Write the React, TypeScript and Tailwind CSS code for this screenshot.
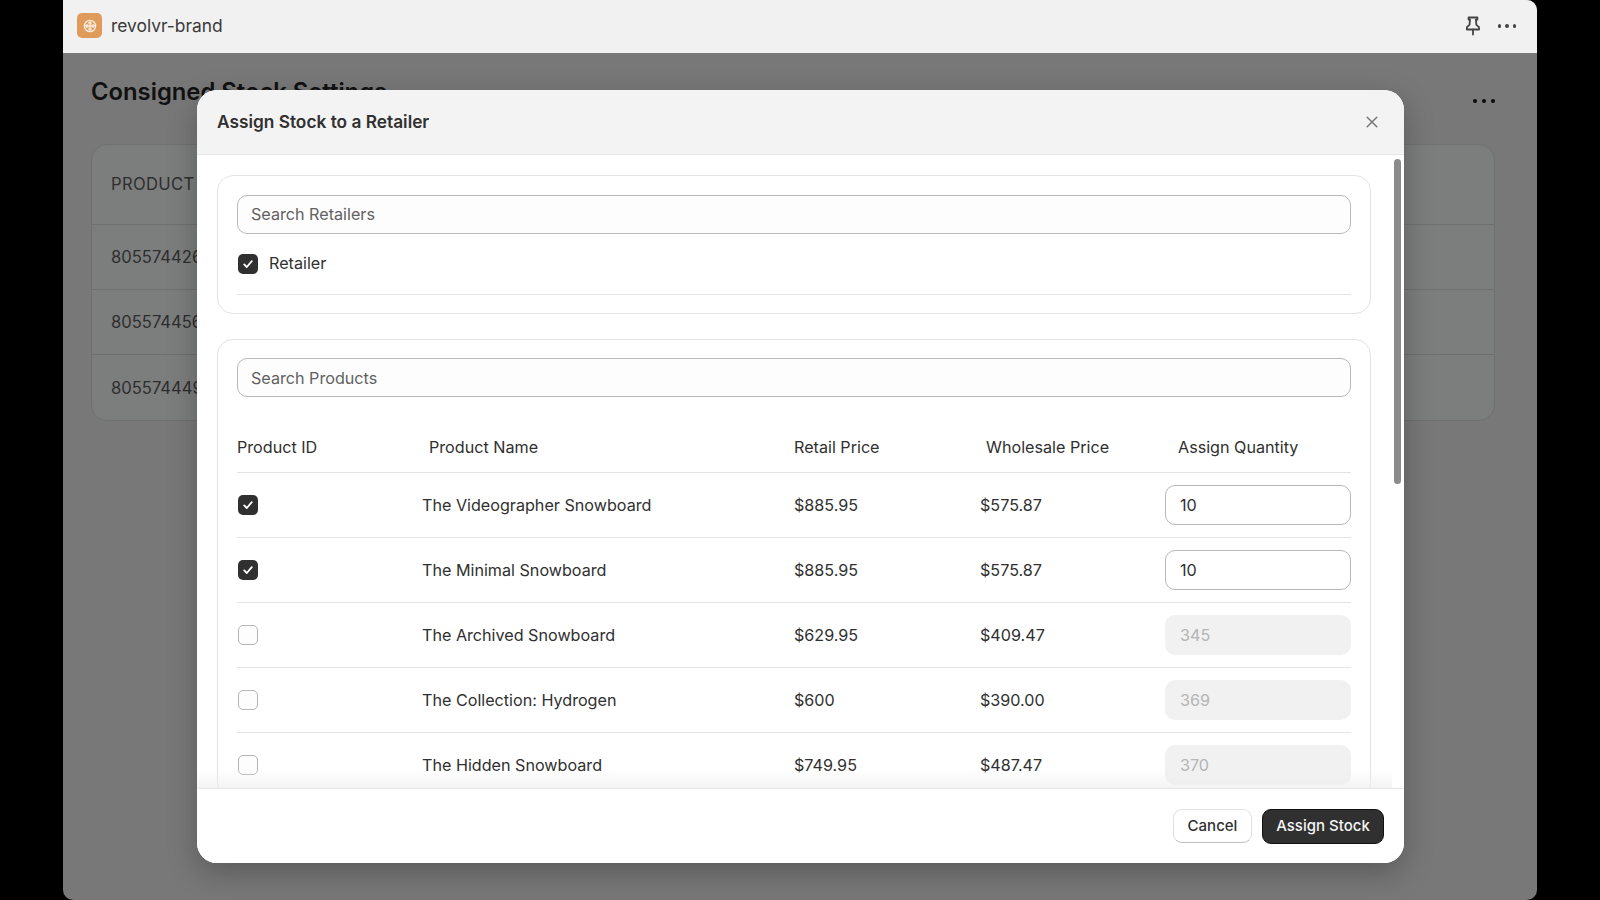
import React from "react";

const rows = [
  { name: "The Videographer Snowboard", retail: "$885.95", whole: "$575.87", qty: "10", on: true },
  { name: "The Minimal Snowboard", retail: "$885.95", whole: "$575.87", qty: "10", on: true },
  { name: "The Archived Snowboard", retail: "$629.95", whole: "$409.47", qty: "345", on: false },
  { name: "The Collection: Hydrogen", retail: "$600", whole: "$390.00", qty: "369", on: false },
  { name: "The Hidden Snowboard", retail: "$749.95", whole: "$487.47", qty: "370", on: false },
];

function Check({ on }: { on: boolean }) {
  return on ? (
    <span className="flex h-[20px] w-[20px] items-center justify-center rounded-[5px] bg-[#303030]">
      <svg width="12" height="12" viewBox="0 0 12 12" fill="none">
        <path d="M2.2 6.4 4.8 9 9.8 3.2" stroke="#fff" strokeWidth="1.8" strokeLinecap="round" strokeLinejoin="round" />
      </svg>
    </span>
  ) : (
    <span className="block h-[20px] w-[20px] rounded-[5px] border border-[#b5b5b5] bg-[#fdfdfd]" />
  );
}

function Dots({ color, gap, size }: { color: string; gap: string; size: string }) {
  return (
    <span className={`flex items-center ${gap}`}>
      <span className={`rounded-full ${size} ${color}`} />
      <span className={`rounded-full ${size} ${color}`} />
      <span className={`rounded-full ${size} ${color}`} />
    </span>
  );
}

function SearchBox({ text }: { text: string }) {
  return (
    <div className="flex h-[39px] items-center rounded-[10px] border border-[#b9b9b9] bg-[#fdfdfd] pl-[13px] text-[#616161]">
      {text}
    </div>
  );
}

export default function App() {
  return (
    <div className="flex h-[900px] w-full overflow-hidden bg-black pl-[63px] pr-[63px] text-[16.15px] text-[#303030] [font-family:Inter,'Liberation_Sans',sans-serif]">
      <div className="relative flex h-full w-full flex-col overflow-hidden rounded-b-[10px] rounded-tr-[10px] bg-[#787878]">
        <header className="flex h-[53px] shrink-0 items-center justify-between bg-[#f1f1f1] pb-[1px] pl-[14px] pr-[21px]">
          <div className="flex items-center gap-[9px]">
            <span className="flex h-[25px] w-[25px] items-center justify-center rounded-[5px] bg-[#e09b5b]">
              <svg width="14" height="14" viewBox="0 0 14 14" fill="none" stroke="#fbeee0" strokeWidth="1.4">
                <circle cx="7" cy="7" r="5.6" />
                <circle cx="7" cy="7" r="1.1" />
                <circle cx="7" cy="3.9" r="1" />
                <circle cx="7" cy="10.1" r="1" />
                <circle cx="3.9" cy="7" r="1" />
                <circle cx="10.1" cy="7" r="1" />
              </svg>
            </span>
            <span className="text-[17.4px] text-[#3a3a3a]">revolvr-brand</span>
          </div>
          <div className="flex items-center gap-[17px]">
            <svg width="16" height="20" viewBox="0 0 16 20" fill="none" stroke="#444" strokeWidth="1.8" strokeLinejoin="round" strokeLinecap="round">
              <path d="M3.6 1.5h8.8v2.2h-1.5l.5 5.2 2.6 2.3v2.3H1.9v-2.3l2.6-2.3.5-5.2H3.6V1.5Z" />
              <path d="M8 13.5v5" />
            </svg>
            <Dots color="bg-[#444444]" gap="gap-[4px]" size="h-[3.5px] w-[3.5px]" />
          </div>
        </header>

        <main className="flex-1 pl-[28px] pr-[42px] pt-[24px]">
          <div className="flex items-start justify-between">
            <h1 className="text-[23.8px] font-semibold leading-[30px] text-[#111111]">Consigned Stock Settings</h1>
            <span className="mt-[22px]">
              <Dots color="bg-[#0c0c0c]" gap="gap-[5px]" size="h-[4px] w-[4px]" />
            </span>
          </div>
          <div className="mt-[37px] overflow-hidden rounded-[16px] border border-[#707070] bg-[#7c7d7d] text-[16.6px] text-[#2e2e2e]">
            <div className="flex h-[80px] items-center border-b border-[#6f6f6f] pb-[1px] pl-[19px] tracking-[0.02em]">PRODUCT ID</div>
            <div className="flex h-[65px] items-center border-b border-[#6f6f6f] pl-[19px] pt-[1px]">8055744261</div>
            <div className="flex h-[65px] items-center border-b border-[#6f6f6f] pl-[19px] pt-[1px]">8055744561</div>
            <div className="flex h-[65px] items-center pl-[19px] pt-[1px]">8055744491</div>
          </div>
        </main>

        <section className="absolute left-[134px] top-[90px] flex h-[773px] w-[1207px] flex-col overflow-hidden rounded-[20px] bg-white shadow-[0_10px_30px_rgba(0,0,0,0.25)]">
          <div className="flex h-[65px] shrink-0 items-center justify-between border-b border-[#e6e6e6] bg-[#f3f3f3] pl-[20px] pr-[26px]">
            <h2 className="text-[17.3px] font-semibold text-[#303030]">Assign Stock to a Retailer</h2>
            <svg width="12" height="12" viewBox="0 0 12 12" fill="none" stroke="#777" strokeWidth="1.5" strokeLinecap="round">
              <path d="M1.2 1.2 10.8 10.8M10.8 1.2 1.2 10.8" />
            </svg>
          </div>

          <div className="relative flex-1 overflow-hidden pl-[20px] pr-[33px] pt-[20px]">
            <div className="rounded-[16px] border border-[#e3e3e3] pl-[19px] pr-[19px] pt-[19px]">
              <SearchBox text="Search Retailers" />
              <div className="flex items-center gap-[11px] pb-[18px] pl-[1px] pt-[18px]">
                <Check on />
                <span className="-translate-y-[1px]">Retailer</span>
              </div>
              <div className="mb-[18px] border-t border-[#e3e3e3]" />
            </div>

            <div className="mt-[25px] rounded-[16px] border border-[#e3e3e3] pl-[19px] pr-[19px] pt-[18px]">
              <SearchBox text="Search Products" />
              <div className="mt-[29px] grid h-[47px] grid-cols-[185px_372px_186px_185px_186px] items-start border-b border-[#e3e3e3] pt-[9px]">
                <span>Product ID</span>
                <span className="pl-[7px]">Product Name</span>
                <span>Retail Price</span>
                <span className="pl-[6px]">Wholesale Price</span>
                <span className="pl-[13px]">Assign Quantity</span>
              </div>
              {rows.map((r) => (
                <div key={r.name} className="grid h-[65px] grid-cols-[185px_372px_186px_185px_186px] items-center border-b border-[#e3e3e3]">
                  <span className="pl-[1px]">
                    <Check on={r.on} />
                  </span>
                  <span>{r.name}</span>
                  <span>{r.retail}</span>
                  <span>{r.whole}</span>
                  {r.on ? (
                    <span className="flex h-[40px] items-center rounded-[10px] border border-[#b9b9b9] bg-white pl-[14px]">{r.qty}</span>
                  ) : (
                    <span className="flex h-[40px] items-center rounded-[10px] bg-[#f1f1f1] pl-[15px] text-[#b5b5b5]">{r.qty}</span>
                  )}
                </div>
              ))}
            </div>

            <div className="absolute bottom-0 left-0 right-[12px] h-[18px] bg-gradient-to-b from-white/0 to-[#eeeeee]/70" />
            <div className="absolute right-[3px] top-[4px] h-[325px] w-[7px] rounded-full bg-[#8b8b8b]" />
          </div>

          <footer className="flex h-[75px] shrink-0 items-center justify-end gap-[10px] border-t border-[#e6e6e6] bg-white pr-[20px] text-[15px] font-medium">
            <button className="h-[34px] w-[79px] rounded-[9px] border border-[#e0e0e0] border-b-[#bdbdbd] bg-white text-[#303030]">Cancel</button>
            <button className="h-[35px] w-[122px] rounded-[9px] border border-[#111111] bg-[#303030] text-[#f5f5f5]">Assign Stock</button>
          </footer>
        </section>
      </div>
    </div>
  );
}
